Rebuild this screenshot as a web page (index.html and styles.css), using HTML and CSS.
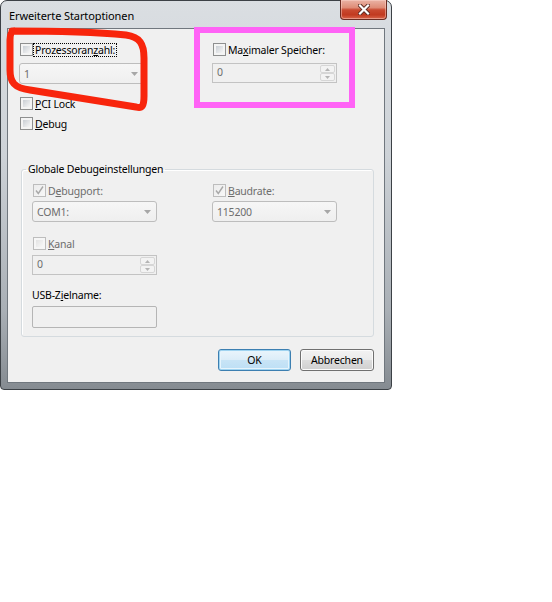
FILE: index.html
```html
<!DOCTYPE html>
<html lang="de">
<head>
<meta charset="utf-8">
<title>Erweiterte Startoptionen</title>
<link rel="stylesheet" href="styles.css">
</head>
<body>
<div class="page">
  <div class="window">
    <div class="titlebar">
      <span class="title">Erweiterte Startoptionen</span>
      <div class="close">
        <svg width="12" height="11" viewBox="0 0 12 11">
          <path d="M2 1.5 L10 9.5 M10 1.5 L2 9.5" stroke="#5a2a22" stroke-width="4" stroke-linecap="square"/>
          <path d="M2 1.5 L10 9.5 M10 1.5 L2 9.5" stroke="#ffffff" stroke-width="2.2" stroke-linecap="square"/>
        </svg>
      </div>
    </div>
    <div class="client">
      <div class="top">
        <div class="col">
          <div class="check-row">
            <span class="cb"></span>
            <span class="lbl focused">Prozessoran<u>z</u>ahl:</span>
          </div>
          <div class="combo gap-field"><span class="val">1</span><svg class="drop" width="7" height="4" viewBox="0 0 7 4"><path d="M0 0 H7 L3.5 4 Z" fill="#a7a7a7"/></svg></div>
          <div class="check-row gap-pci">
            <span class="cb"></span>
            <span class="lbl"><u>P</u>CI Lock</span>
          </div>
          <div class="check-row gap-debug">
            <span class="cb"></span>
            <span class="lbl"><u>D</u>ebug</span>
          </div>
        </div>
        <div class="col">
          <div class="check-row">
            <span class="cb"></span>
            <span class="lbl">Ma<u>x</u>imaler Speicher:</span>
          </div>
          <div class="spin gap-field">
            <span class="val">0</span>
            <span class="arrows">
              <span class="arr"><svg width="5" height="3" viewBox="0 0 5 3"><path d="M0 3 H5 L2.5 0 Z" fill="#b4b4b4"/></svg></span>
              <span class="arr"><svg width="5" height="3" viewBox="0 0 5 3"><path d="M0 0 H5 L2.5 3 Z" fill="#b4b4b4"/></svg></span>
            </span>
          </div>
        </div>
      </div>

      <fieldset class="group">
        <legend>Globale Debugeinstellungen</legend>
        <div class="group-grid">
          <div class="gcol">
            <div class="check-row">
              <span class="cb dis checked"><svg width="11" height="11" viewBox="0 0 11 11"><path d="M2 5.5 L4.3 8.5 L9 1.5" fill="none" stroke="#a9a9a9" stroke-width="1.4"/></svg></span>
              <span class="lbl grey">D<u>e</u>bugport:</span>
            </div>
            <div class="combo gap-combo"><span class="val">COM1:</span><svg class="drop" width="7" height="4" viewBox="0 0 7 4"><path d="M0 0 H7 L3.5 4 Z" fill="#a7a7a7"/></svg></div>
            <div class="check-row gap-kanal">
              <span class="cb dis"></span>
              <span class="lbl grey"><u>K</u>anal</span>
            </div>
            <div class="spin gap-spin">
              <span class="val">0</span>
              <span class="arrows">
                <span class="arr"><svg width="5" height="3" viewBox="0 0 5 3"><path d="M0 3 H5 L2.5 0 Z" fill="#b4b4b4"/></svg></span>
                <span class="arr"><svg width="5" height="3" viewBox="0 0 5 3"><path d="M0 0 H5 L2.5 3 Z" fill="#b4b4b4"/></svg></span>
              </span>
            </div>
            <div class="plain-label">USB-Z<u>i</u>elname:</div>
            <div class="textbox"></div>
          </div>
          <div class="gcol">
            <div class="check-row">
              <span class="cb dis checked"><svg width="11" height="11" viewBox="0 0 11 11"><path d="M2 5.5 L4.3 8.5 L9 1.5" fill="none" stroke="#a9a9a9" stroke-width="1.4"/></svg></span>
              <span class="lbl grey"><u>B</u>audrate:</span>
            </div>
            <div class="combo gap-combo"><span class="val">115200</span><svg class="drop" width="7" height="4" viewBox="0 0 7 4"><path d="M0 0 H7 L3.5 4 Z" fill="#a7a7a7"/></svg></div>
          </div>
        </div>
      </fieldset>

      <div class="buttons">
        <button class="btn btn-default">OK</button>
        <button class="btn btn-cancel">Abbrechen</button>
      </div>
    </div>
  </div>

  <svg class="annot-red" width="160" height="120" viewBox="0 0 160 120">
    <path d="M12 31 C 50 31, 95 32, 126 35 C 140 37, 144 44, 144 58 L 144 96 C 144 106, 142 109, 136 107 C 100 101, 60 95, 30 90 C 14 88, 10 82, 10 70 L 10 40 C 10 34, 11 32, 14 31"
          fill="none" stroke="#f8250c" stroke-width="7" stroke-linecap="round" stroke-linejoin="round"/>
  </svg>
  <div class="annot-pink"></div>
</div>
</body>
</html>
```

FILE: styles.css
```css
* {
  box-sizing: border-box;
}

html,
body {
  margin: 0;
  background: #ffffff;
}

body {
  font-family: "Noto Sans", "Open Sans", "DejaVu Sans", sans-serif;
  font-size: 10.5px;
  letter-spacing: -0.2px;
  color: #000000;
}

.page {
  position: relative;
  width: 552px;
  height: 602px;
}

/* ---------- window frame ---------- */
.window {
  width: 392px;
  height: 390px;
  border: 1px solid #3c4146;
  border-radius: 7px 7px 4px 4px;
  background: linear-gradient(#dadee2 0%, #cdd2d7 40%, #a9afb5 80%, #858b91 100%);
  padding: 0 6px 6px;
  display: flex;
  flex-direction: column;
}

.titlebar {
  height: 27px;
  display: flex;
  justify-content: space-between;
  align-items: flex-start;
}

.title {
  margin-left: 2px;
  padding-top: 7px;
  line-height: 15px;
  font-size: 11px;
  letter-spacing: -0.1px;
  color: #000000;
}

.close {
  width: 47px;
  height: 20px;
  margin-top: -1px;
  margin-right: -2px;
  border: 1px solid #6b2c22;
  border-top: 0;
  border-radius: 0 0 4px 4px;
  background: linear-gradient(#eab3a5 0%, #df8c77 40%, #c94a31 52%, #c13a20 78%, #d9664b 100%);
  box-shadow: inset 0 0 0 1px rgba(255, 220, 210, 0.45);
  display: flex;
  align-items: center;
  justify-content: center;
}

.client {
  flex: 1;
  background: #f0f0f0;
  border: 1px solid #70777e;
  padding: 12px 10px 0 11px;
  display: flex;
  flex-direction: column;
}

/* ---------- top area ---------- */
.top {
  display: grid;
  grid-template-columns: 193px 1fr;
}

.col {
  display: flex;
  flex-direction: column;
  align-items: flex-start;
}

.check-row {
  height: 17px;
  display: flex;
  align-items: center;
  line-height: 14px;
}

.cb {
  width: 13px;
  height: 13px;
  margin-left: 1px;
  flex: none;
  border: 1px solid #8e8f8f;
  padding: 2px;
  background: linear-gradient(135deg, #c9ced4, #f6f6f6) content-box, #f4f4f4;
}

.cb.dis {
  border-color: #bdbdbd;
  background: linear-gradient(135deg, #e3e3e3, #f8f8f8) content-box, #f6f6f6;
}

.cb.checked {
  padding: 0;
  background: linear-gradient(135deg, #ececec, #f8f8f8);
  display: flex;
}

.lbl {
  padding: 0 2px;
  height: 14px;
}

.lbl.focused {
  outline: 1px dotted #000000;
  outline-offset: -1px;
}

.lbl.grey {
  color: #6d6d6d;
}

u {
  text-decoration: underline;
  text-underline-offset: 1px;
}

.gap-field {
  margin-top: 5px;
}

.gap-pci {
  margin-top: 11px;
}

.gap-debug {
  margin-top: 3px;
}

/* ---------- fields ---------- */
.combo {
  width: 125px;
  height: 21px;
  border: 1px solid #bdbdbd;
  border-radius: 3px;
  background: linear-gradient(#f6f6f6, #efefef);
  display: flex;
  align-items: center;
  justify-content: space-between;
  padding: 0 5px 0 4px;
  color: #6d6d6d;
}

.spin {
  width: 125px;
  height: 20px;
  border: 1px solid #c3c3c3;
  background: #f0f0f0;
  display: flex;
  align-items: stretch;
  color: #6d6d6d;
}

.spin .val {
  flex: 1;
  padding-left: 4px;
  line-height: 17px;
}

.arrows {
  width: 17px;
  padding: 1px;
  display: flex;
  flex-direction: column;
}

.arr {
  flex: 1;
  border: 1px solid #d6d6d6;
  border-radius: 2px;
  background: #f3f3f3;
  display: flex;
  align-items: center;
  justify-content: center;
}

.textbox {
  width: 125px;
  height: 22px;
  margin-top: 2px;
  border: 1px solid #b5b5b5;
  border-radius: 2px;
  background: #f0f0f0;
}

/* ---------- group box ---------- */
.group {
  margin: 30px 0 0 2px;
  width: 353px;
  border: 1px solid #d5dbdf;
  border-radius: 3px;
  padding: 5px 10px 8px;
  box-shadow: inset 1px 1px 0 #ffffff;
}

.group legend {
  margin-left: -6px;
  padding: 0 2px;
  line-height: 15px;
}

.group-grid {
  display: grid;
  grid-template-columns: 180px 1fr;
}

.gcol {
  display: flex;
  flex-direction: column;
  align-items: flex-start;
}

.gap-combo {
  margin-top: 2px;
}

.gap-kanal {
  margin-top: 13px;
}

.gap-spin {
  margin-top: 3px;
}

.plain-label {
  margin-top: 12px;
  height: 17px;
  line-height: 17px;
}

/* ---------- buttons ---------- */
.buttons {
  margin-top: 12px;
  display: flex;
  justify-content: flex-end;
  gap: 9px;
}

.btn {
  height: 22px;
  font-family: inherit;
  font-size: 10.5px;
  letter-spacing: -0.2px;
  color: #000000;
  border-radius: 3px;
  padding: 0;
  line-height: 18px;
}

.btn-default {
  width: 73px;
  border: 1px solid #3c7fb1;
  background: linear-gradient(#eaf5fc 0%, #dcedf8 48%, #c8e4f6 52%, #bcdff5 100%);
  box-shadow: inset 0 0 0 1px #9fd3f0, inset 0 0 0 2px #e6f4fc;
}

.btn-cancel {
  width: 74px;
  border: 1px solid #707070;
  background: linear-gradient(#f2f2f2 0%, #ebebeb 48%, #dddddd 52%, #cfcfcf 100%);
  box-shadow: inset 0 0 0 1px #fbfbfb;
}

/* ---------- annotations drawn over the screenshot ---------- */
.annot-red {
  position: absolute;
  left: 0;
  top: 0;
  pointer-events: none;
}

.annot-pink {
  position: absolute;
  left: 194px;
  top: 27px;
  width: 161px;
  height: 81px;
  border: 6px solid #ff63f6;
  pointer-events: none;
}
```
